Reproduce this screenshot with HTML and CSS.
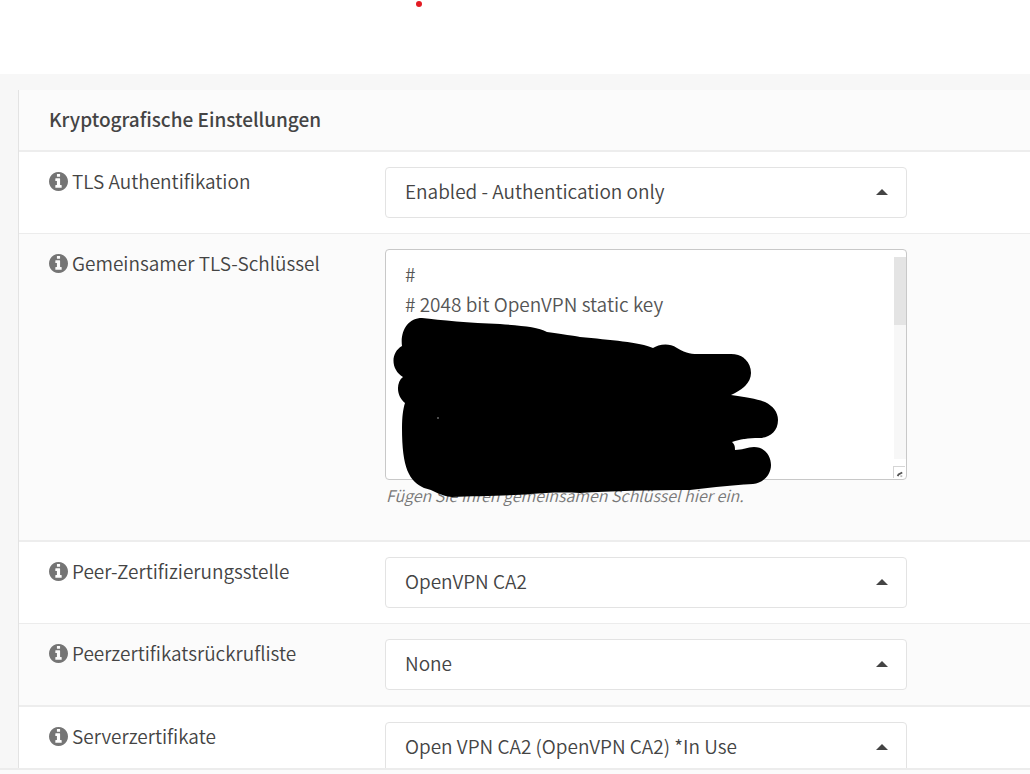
FILE: index.html
```
<!DOCTYPE html>
<html lang="de">
<head>
    <meta charset="utf-8">
    <title>Kryptografische Einstellungen</title>
    <link rel="stylesheet" href="styles.css">
</head>
<body>
    <!-- shared icons -->
    <svg class="defs" width="0" height="0">
        <symbol id="info" viewBox="0 0 1536 1536">
            <path fill-rule="evenodd" d="M1024 1248v-160q0-14-9-23t-23-9h-96V544q0-14-9-23t-23-9H544q-14 0-23 9t-9 23v160q0 14 9 23t23 9h96v320h-96q-14 0-23 9t-9 23v160q0 14 9 23t23 9h448q14 0 23-9t9-23zM896 352V192q0-14-9-23t-23-9H672q-14 0-23 9t-9 23v160q0 14 9 23t23 9h192q14 0 23-9t9-23zM1536 768q0 209-103 385.500T1153.500 1433 768 1536 382.500 1433 103 1153.500 0 768 103 382.500 382.500 103 768 0 1153.500 103 1433 382.500 1536 768z"/>
        </symbol>
        <symbol id="caret" viewBox="0 0 12 6">
            <path d="M0 6L6 0L12 6Z"/>
        </symbol>
    </svg>

    <header class="topbar">
        <svg class="dot" viewBox="0 0 6 6"><circle cx="3" cy="3" r="3"/></svg>
    </header>

    <main class="content">
        <form class="panel">
            <h2>Kryptografische Einstellungen</h2>

            <div class="row">
                <label for="tlsmode"><svg class="info"><use href="#info"/></svg>TLS Authentifikation</label>
                <div class="select">
                    <select id="tlsmode"><option>Enabled - Authentication only</option></select>
                    <svg class="caret"><use href="#caret"/></svg>
                </div>
            </div>

            <div class="row alt key">
                <label for="tlskey"><svg class="info"><use href="#info"/></svg>Gemeinsamer TLS-Schlüssel</label>
                <div class="keybox">
                    <textarea id="tlskey" spellcheck="false">#
# 2048 bit OpenVPN static key</textarea>
                    <div class="track"><div class="thumb"></div></div>
                    <svg class="grip" viewBox="0 0 12 12">
                        <path d="M4 10L5 8L9 6" stroke="#555" stroke-width="2" fill="none"/>
                        <path d="M7 10h2" stroke="#bbb" stroke-width="2"/>
                    </svg>
                    <p class="help">Fügen Sie Ihren gemeinsamen Schlüssel hier ein.</p>
                    <svg class="scribble" viewBox="393 317 386 181">
                        <path d="M402 346C400 331 408 318 422 318C440 320 470 323 500 324C524 326 538 327 547 332C562 334 575 336 580 337C610 340 640 342 653 348C658 345 668 342 677 348C687 354 692 354 700 354L731 354C743 354 751 362 751 373C751 383 742 390 731 395C746 397 757 399 765 402C773 406 778 412 778 420C778 432 769 438 759 438C748 438 741 439 732 442C735 445 735 447 735 450C744 450 747 447 754 447C764 447 771 455 771 465C771 475 763 483 753 484C730 485 710 488 690 490C650 490 610 491 580 493C560 492 545 493 530 494C510 496 475 496 452 497C440 496 434 490 424 488C409 481 402 468 402 428C402 417 403 409 405 403C396 396 396 382 403 377C391 370 390 353 402 346Z"/>
                        <circle cx="438" cy="418" r="1" fill="#666"/>
                    </svg>
                </div>
            </div>

            <div class="row">
                <label for="ca"><svg class="info"><use href="#info"/></svg>Peer-Zertifizierungsstelle</label>
                <div class="select">
                    <select id="ca"><option>OpenVPN CA2</option></select>
                    <svg class="caret"><use href="#caret"/></svg>
                </div>
            </div>

            <div class="row alt">
                <label for="crl"><svg class="info"><use href="#info"/></svg>Peerzertifikatsrückrufliste</label>
                <div class="select">
                    <select id="crl"><option>None</option></select>
                    <svg class="caret"><use href="#caret"/></svg>
                </div>
            </div>

            <div class="row">
                <label for="cert"><svg class="info"><use href="#info"/></svg>Serverzertifikate</label>
                <div class="select">
                    <select id="cert"><option>Open VPN CA2 (OpenVPN CA2) *In Use</option></select>
                    <svg class="caret"><use href="#caret"/></svg>
                </div>
            </div>
        </form>
    </main>

    <footer class="footer"></footer>
</body>
</html>
```
FILE: styles.css
```
* {
    box-sizing: border-box;
}
body {
    margin: 0;
    height: 100vh;
    display: flex;
    flex-direction: column;
    background: #f7f7f7;
    color: #444;
    font-family: "Noto Sans CJK SC", sans-serif;
    font-size: 19px;
    font-weight: 350;
    line-height: 30px;
}
.defs {
    position: absolute;
}
.topbar {
    flex: none;
    position: relative;
    height: 74px;
    background: #fff;
}
.dot {
    position: absolute;
    left: 416px;
    top: 1px;
    width: 6px;
    height: 6px;
    fill: #e31b23;
}
.content {
    flex: 1;
    min-height: 0;
    overflow: hidden;
    padding: 16px 0 0 18px;
}
.panel {
    border-left: 1px solid #e3e3e3;
    background: #fff;
}
h2 {
    margin: 0;
    padding: 14px 30px 16px;
    border-bottom: 2px solid #ededed;
    background: #fbfbfb;
    font-size: 19px;
    font-weight: 500;
    line-height: 30px;
}
.row {
    display: grid;
    grid-template-columns: 336px minmax(0, 522px);
    padding: 15px 15px 15px 30px;
    border-bottom: 1px solid #ececec;
}
.alt {
    background: #fbfbfb;
    border-bottom: 2px solid #ededed;
}
.key {
    padding-bottom: 30px;
}
label {
    display: flex;
    align-items: center;
    gap: 4px;
    height: 28px;
}
.info {
    width: 19px;
    height: 19px;
    fill: #757575;
}
.select, .keybox {
    position: relative;
}
select {
    display: block;
    appearance: none;
    width: 100%;
    height: 51px;
    padding: 0 50px 3px 19px;
    border: 1px solid #e3e3e3;
    border-radius: 4px;
    background: #fff;
    color: #444;
    font: inherit;
}
.caret {
    position: absolute;
    right: 19px;
    top: 22px;
    width: 12px;
    height: 6px;
    fill: #444;
    pointer-events: none;
}
textarea {
    display: block;
    width: 100%;
    height: 231px;
    padding: 9px 19px;
    border: 1px solid #c8c8c8;
    border-radius: 4px;
    background: #fff;
    color: #555;
    font: inherit;
    resize: none;
    overflow: hidden;
}
.track {
    position: absolute;
    right: 1px;
    top: 8px;
    width: 12px;
    height: 202px;
    background: #f7f7f7;
}
.thumb {
    height: 68px;
    background: #e4e4e4;
}
.grip {
    position: absolute;
    right: 2px;
    bottom: 32px;
    width: 12px;
    height: 12px;
    border-top: 1px solid #d5d5d5;
    border-left: 1px solid #d5d5d5;
}
.help {
    margin: 0;
    padding: 0 1px;
    color: #777;
    font-size: 16px;
    font-style: italic;
}
.scribble {
    position: absolute;
    left: 8px;
    top: 68px;
    width: 386px;
    height: 181px;
}
.footer {
    flex: none;
    height: 6px;
    border-top: 2px solid #ececec;
    background: #fbfbfb;
}
```
